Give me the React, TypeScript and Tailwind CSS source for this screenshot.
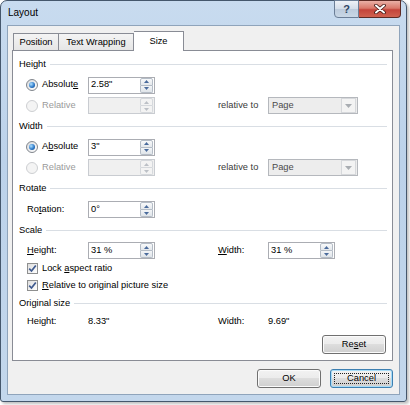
import React from "react";

const Arrow = ({ up, disabled }: { up?: boolean; disabled?: boolean }) => (
  <svg width="5" height="3" viewBox="0 0 5 3">
    <path d={up ? "M0 3 L2.5 0 L5 3Z" : "M0 0 L2.5 3 L5 0Z"} fill={disabled ? "#bcc0c6" : "#4a6b9c"} />
  </svg>
);

const Spin = ({ disabled }: { disabled?: boolean }) => (
  <div className="flex flex-col w-[13px] h-[15px] mr-px shrink-0">
    <div className={"flex items-center justify-center h-[8px] border rounded-t-[2px] " + (disabled ? "border-[#d5d8dc] bg-[#f3f3f3]" : "border-[#b4bcc6] bg-[linear-gradient(#f8f9fa,#e4e8ec)]")}>
      <Arrow up disabled={disabled} />
    </div>
    <div className={"flex items-center justify-center h-[7px] border border-t-0 rounded-b-[2px] " + (disabled ? "border-[#d5d8dc] bg-[#f3f3f3]" : "border-[#b4bcc6] bg-[linear-gradient(#f3f5f7,#dfe4e9)]")}>
      <Arrow disabled={disabled} />
    </div>
  </div>
);

const Input = ({ value = "", disabled }: { value?: string; disabled?: boolean }) => (
  <div className={"flex items-center w-[67px] h-[17px] border shrink-0 " + (disabled ? "border-[#c9ccd1] bg-[#f0f0f0]" : "border-[#abadb3] bg-white")}>
    <span className="flex-1 pl-[2px]">{value}</span>
    <Spin disabled={disabled} />
  </div>
);

const Dropdown = () => (
  <div className="flex items-center w-[90px] h-[17px] border border-[#b5b8bd] bg-[#ededed] shrink-0">
    <span className="flex-1 pl-[3px] text-[#4a4a4a]">Page</span>
    <div className="flex items-center justify-center w-[15px] h-[15px] mr-px border border-[#d6d8db] bg-[#f3f3f3]">
      <svg width="7" height="4" viewBox="0 0 7 4">
        <path d="M0 0 L3.5 4 L7 0Z" fill="#a9adb2" />
      </svg>
    </div>
  </div>
);

const Radio = ({ checked, disabled }: { checked?: boolean; disabled?: boolean }) => (
  <span className={"flex items-center justify-center w-[12px] h-[12px] rounded-full border shrink-0 " + (disabled ? "border-[#cdcfd2] bg-[#f4f4f4]" : "border-[#80858c] bg-[linear-gradient(135deg,#d9dbde,#ffffff)]")}>
    {checked && <span className="w-[6px] h-[6px] rounded-full bg-[radial-gradient(circle_at_35%_35%,#b0e2ff,#2f7bcb_55%,#0d3f78)]" />}
  </span>
);

const Check = () => (
  <span className="flex items-center justify-center w-[11px] h-[11px] border border-[#8e8f8f] bg-[linear-gradient(135deg,#dedede,#ffffff)] shrink-0">
    <svg width="9" height="9" viewBox="0 0 9 9">
      <path d="M1.2 4.6 L3.5 7 L7.8 1.4" fill="none" stroke="#3f5a8f" strokeWidth="1.7" />
    </svg>
  </span>
);

const Header = ({ children, h }: { children: React.ReactNode; h: string }) => (
  <div className={"flex items-center pl-[6px] pr-[5px] " + h}>
    <span>{children}</span>
    <div className="flex-1 h-px bg-[#d9dee4] ml-[4px]" />
  </div>
);

const U = ({ children }: { children: React.ReactNode }) => (
  <span className="underline underline-offset-[1px]">{children}</span>
);

const Button = ({ children, focused, w }: { children: React.ReactNode; focused?: boolean; w: string }) => (
  <div
    className={
      "relative flex items-center justify-center h-[19px] rounded-[3px] border bg-[linear-gradient(#f2f2f2_0%,#ebebeb_50%,#dddddd_50%,#cfcfcf_100%)] " +
      w +
      (focused ? " border-[#3c7fb1] shadow-[inset_0_0_0_1px_#a7dcf8]" : " border-[#707070] shadow-[inset_0_0_0_1px_#fbfbfb]")
    }
  >
    {focused && <div className="absolute inset-[3px] border border-dotted border-[#222]" />}
    <span className="relative">{children}</span>
  </div>
);

export default function App() {
  return (
    <div className="w-[410px] h-[405px] bg-white overflow-hidden font-['Liberation_Sans',Arial,sans-serif] text-[9.3px] text-black leading-none">
      <div className="flex flex-col w-[407px] h-[402px] rounded-t-[7px] rounded-b-[3px] border border-[#45576c] bg-[linear-gradient(to_bottom,#c8dbef,#bcd2ea_40%,#c3d7ec)] shadow-[2px_2px_3px_rgba(0,0,0,0.25)]">
        {/* title bar */}
        <div className="flex items-start h-[24px] shrink-0">
          <span className="self-center pl-[7px] text-[10px] text-black">Layout</span>
          <div className="flex ml-auto mr-[5px] -mt-px">
            <div className="flex items-center justify-center w-[25px] h-[18px] rounded-bl-[4px] border border-[#6b7e96] bg-[linear-gradient(#eef2f7,#d3dde9_50%,#bccbdc_51%,#c9d7e6)] text-[#2f4563] font-bold text-[11px]">
              ?
            </div>
            <div className="flex items-center justify-center w-[42px] h-[18px] rounded-br-[4px] border border-l-0 border-[#5d2a24] bg-[linear-gradient(#eab0a6,#d9786a_45%,#c4443a_55%,#d0614f)]">
              <svg width="12" height="10" viewBox="0 0 12 10">
                <path d="M2 1.5 L10 8.5 M10 1.5 L2 8.5" stroke="#3b1410" strokeWidth="3.6" strokeLinecap="round" />
                <path d="M2 1.5 L10 8.5 M10 1.5 L2 8.5" stroke="#ffffff" strokeWidth="2" strokeLinecap="round" />
              </svg>
            </div>
          </div>
        </div>
        {/* client */}
        <div className="flex flex-col mx-[6px] h-[370px] border border-[#8fa4bb] bg-[#f0f0f0]">
          {/* tabs */}
          <div className="flex items-end ml-[5px] pt-[5px] h-[24px]">
            <div className="flex items-center justify-center w-[46px] h-[17px] border border-b-0 border-[#898c95] bg-[linear-gradient(#f4f4f4,#e6e6e6)] pt-[2px]">
              Position
            </div>
            <div className="flex items-center justify-center w-[75px] h-[17px] border border-b-0 border-l-0 border-[#898c95] bg-[linear-gradient(#f4f4f4,#e6e6e6)] pt-[2px]">
              Text Wrapping
            </div>
            <div className="relative z-10 flex items-center justify-center w-[50px] h-[20px] -mb-px border border-b-0 border-l-0 border-[#898c95] bg-white pt-[1px]">
              Size
            </div>
          </div>
          {/* panel */}
          <div className="flex flex-col ml-[4px] w-[381px] h-[311px] border border-[#898c95] bg-white pt-[3px]">
            <Header h="h-[21px]">Height</Header>
            <div className="flex items-center h-[20px] pl-[13px]">
              <div className="flex items-center gap-[4px] w-[62px]">
                <Radio checked />
                <span>Absolut<U>e</U></span>
              </div>
              <Input value={'2.58"'} />
            </div>
            <div className="flex items-center h-[21px] pl-[13px]">
              <div className="flex items-center gap-[4px] w-[62px] text-[#9a9a9a]">
                <Radio disabled />
                <span>Relative</span>
              </div>
              <Input disabled />
              <span className="ml-[63px] w-[50px] text-[#3a3a3a]">relative to</span>
              <Dropdown />
            </div>
            <Header h="h-[21px]">Width</Header>
            <div className="flex items-center h-[20px] pl-[13px]">
              <div className="flex items-center gap-[4px] w-[62px]">
                <Radio checked />
                <span>A<U>b</U>solute</span>
              </div>
              <Input value={'3"'} />
            </div>
            <div className="flex items-center h-[21px] pl-[13px]">
              <div className="flex items-center gap-[4px] w-[62px] text-[#9a9a9a]">
                <Radio disabled />
                <span>Relative</span>
              </div>
              <Input disabled />
              <span className="ml-[63px] w-[50px] text-[#3a3a3a]">relative to</span>
              <Dropdown />
            </div>
            <Header h="h-[21px]">Rotate</Header>
            <div className="flex items-center h-[21px] pl-[14px]">
              <span className="w-[61px]">Ro<U>t</U>ation:</span>
              <Input value="0°" />
            </div>
            <Header h="h-[21px]">Scale</Header>
            <div className="flex items-center h-[19px] pl-[14px]">
              <span className="w-[61px]"><U>H</U>eight:</span>
              <Input value="31 %" />
              <span className="ml-[63px] w-[50px]"><U>W</U>idth:</span>
              <Input value="31 %" />
            </div>
            <div className="flex items-center gap-[4px] h-[17px] pl-[14px]">
              <Check />
              <span>Lock <U>a</U>spect ratio</span>
            </div>
            <div className="flex items-center gap-[4px] h-[17px] pl-[14px]">
              <Check />
              <span><U>R</U>elative to original picture size</span>
            </div>
            <Header h="h-[19px]">Original size</Header>
            <div className="flex items-center h-[17px] pl-[14px]">
              <span className="w-[61px]">Height:</span>
              <span className="w-[67px]">8.33"</span>
              <span className="ml-[63px] w-[50px]">Width:</span>
              <span>9.69"</span>
            </div>
            <div className="flex justify-end mt-[5px] mr-[6px]">
              <Button w="w-[64px]">
                Re<U>s</U>et
              </Button>
            </div>
          </div>
          {/* buttons */}
          <div className="flex justify-end gap-[9px] mt-[8px] mr-[6px]">
            <Button w="w-[64px]">OK</Button>
            <Button w="w-[63px]" focused>
              Cancel
            </Button>
          </div>
        </div>
      </div>
    </div>
  );
}
